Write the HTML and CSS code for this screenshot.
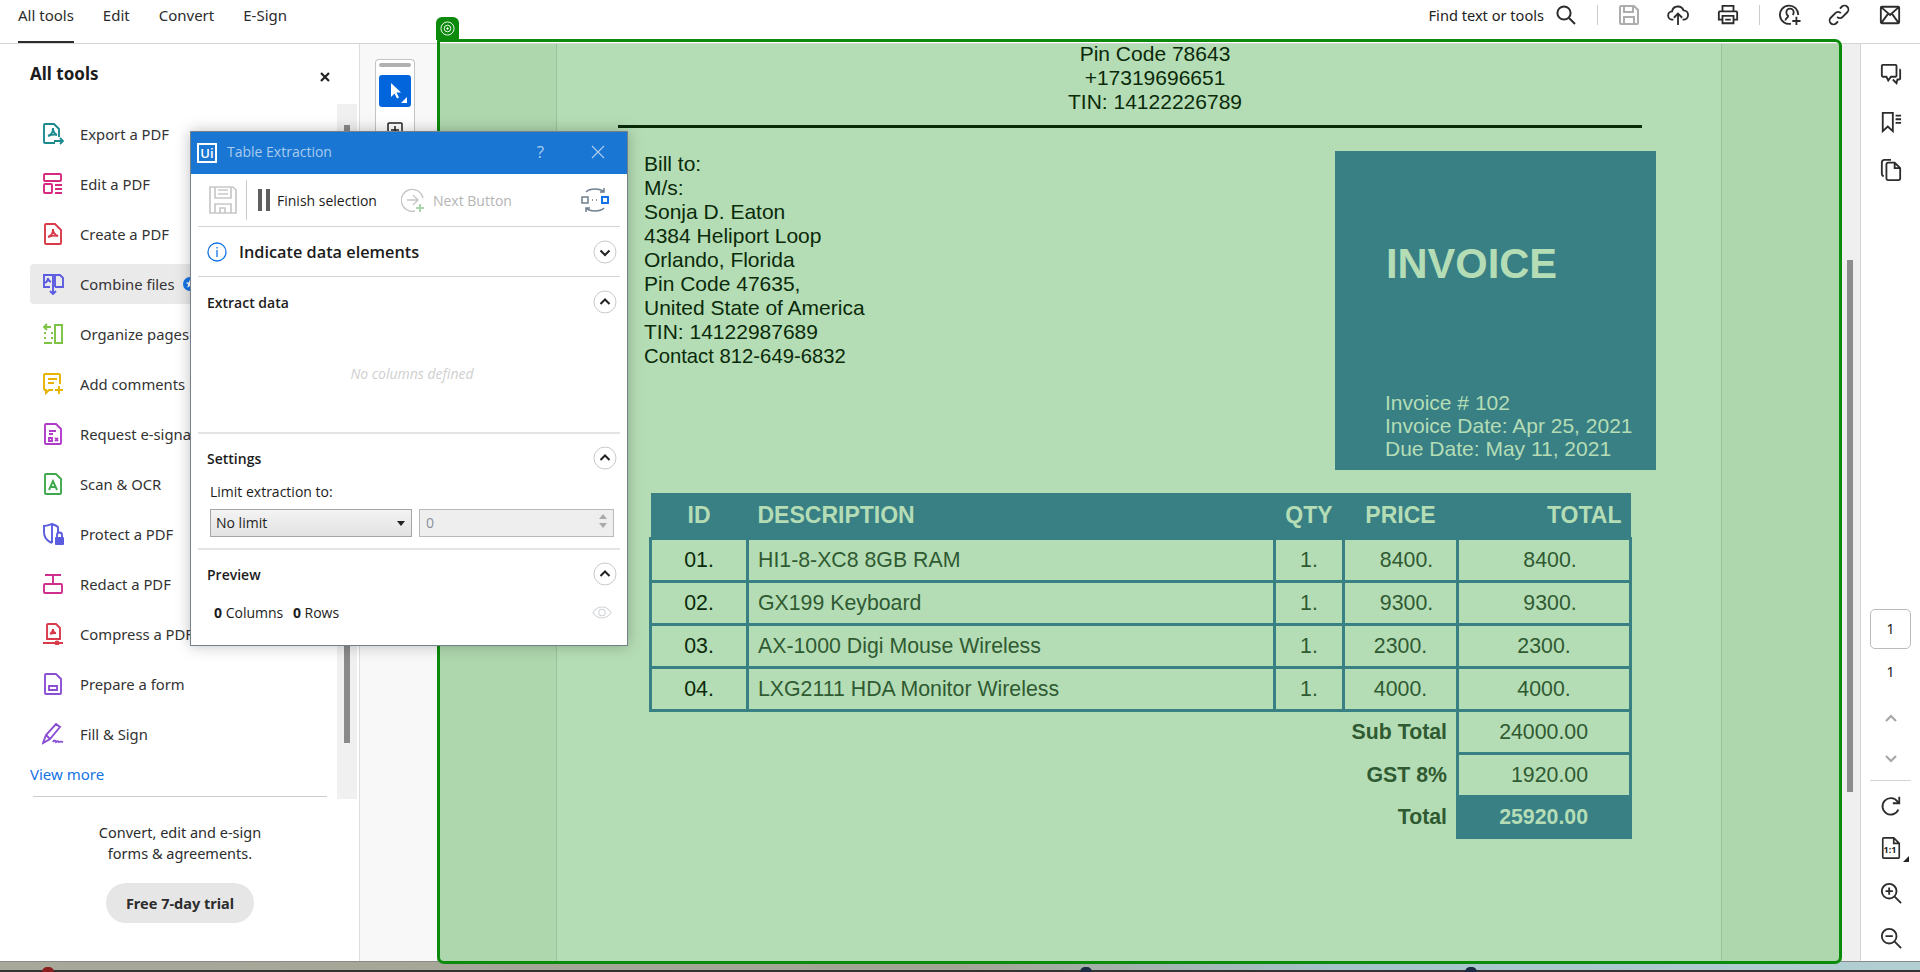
FILE: index.html
```html
<!DOCTYPE html>
<html lang="en">
  <head>
    <meta charset="UTF-8" />
    <title>Invoice - Table Extraction</title>
    <link rel="stylesheet" href="styles.css">
  </head>
  <body>
    <!-- Top bar -->
    <header class="topbar">
      <nav class="tabs">
        <a class="tab tab-active">All tools</a>
        <a class="tab">Edit</a>
        <a class="tab">Convert</a>
        <a class="tab">E-Sign</a>
      </nav>
      <div class="top-actions">
        <span class="find-label">Find text or tools</span>
        <svg class="ico search-ico" viewBox="0 0 22 22"><circle cx="9" cy="9" r="6.6"/><path d="M14 14l6 6"/></svg>
        <span class="top-sep sep-a"></span>
        <svg class="ico ico-off save-ico" viewBox="0 0 22 22"><path d="M3 2h13l4 4v13a1 1 0 0 1-1 1H3a1 1 0 0 1-1-1V3a1 1 0 0 1 1-1zM6 2v6h9V2M6 20v-7h10v7"/></svg>
        <svg class="ico upload-ico" viewBox="0 0 24 24"><path d="M7 17H6a4.500 4.500 0 0 1-.5-9A6.500 6.500 0 0 1 18 7a5 5 0 0 1 0 10h-1M12 23V11M7.500 15l4.500-4.500 4.500 4.500"/></svg>
        <svg class="ico print-ico" viewBox="0 0 24 24"><path d="M6 8V2h12v6M6 17H2V9a1 1 0 0 1 1-1h18a1 1 0 0 1 1 1v8h-4M6 13h12v8H6zM9 17h6"/></svg>
        <span class="top-sep sep-b"></span>
        <svg class="ico share-ico" viewBox="0 0 24 24"><path d="M21 12A10 10 0 1 0 13 21.500M7 18c0-3 3-3 3-5-1.500-1-2-2-2-4a4 4 0 0 1 8 0c0 1-.3 2-1 3M19 14v9M14.500 18.500h9"/></svg>
        <svg class="ico link-ico" viewBox="0 0 24 24"><path d="M10 14a4 4 0 0 0 6 0l5-5a4 4 0 0 0-6-6l-2 2M14 10a4 4 0 0 0-6 0l-5 5a4 4 0 0 0 6 6l2-2"/></svg>
        <svg class="ico mail-ico" viewBox="0 0 24 24"><path d="M3 3h18a1 1 0 0 1 1 1v16a1 1 0 0 1-1 1H3a1 1 0 0 1-1-1V4a1 1 0 0 1 1-1zM3 4l9 8 9-8M3 20l7-9.500M21 20l-7-9.500"/></svg>
      </div>
    </header>

    <main class="workspace">
      <!-- All tools panel -->
      <aside class="tools-panel">
        <div class="panel-head">
          <h2>All tools</h2>
          <svg class="panel-close" viewBox="0 0 10 10"><path d="M1 1l8 8M9 1l-8 8"/></svg>
        </div>
        <div class="panel-scroll"><span class="panel-thumb"></span></div>
        <ul class="tool-list">
          <li class="tool-row">
            <svg class="tool-ico" style="color:#1b8a8f" viewBox="0 0 22 22"><path d="M13 20H3a1 1 0 0 1-1-1V2a1 1 0 0 1 1-1h9l5 5v8M6 13c3-1 5-4 5-8 0 4 2 6 4 7-3-1-6 0-9 1zM12 18h9M18 15l3 3-3 3"/></svg>
            <span>Export a PDF</span>
          </li>
          <li class="tool-row">
            <svg class="tool-ico" style="color:#d6287e" viewBox="0 0 22 22"><path d="M3 1h15a1 1 0 0 1 1 1v5a1 1 0 0 1-1 1H3a1 1 0 0 1-1-1V2a1 1 0 0 1 1-1zM3 11h6a1 1 0 0 1 1 1v7a1 1 0 0 1-1 1H3a1 1 0 0 1-1-1v-7a1 1 0 0 1 1-1zM13 12h7M13 16h7M13 20h7"/></svg>
            <span>Edit a PDF</span>
          </li>
          <li class="tool-row">
            <svg class="tool-ico" style="color:#d93a4a" viewBox="0 0 22 22"><path d="M4 1h9l6 6v13a1 1 0 0 1-1 1H4a1 1 0 0 1-1-1V2a1 1 0 0 1 1-1zM6 14c3-1 5-4 5-8 0 4 2 6 5 7-4-1-7 0-10 1z"/></svg>
            <span>Create a PDF</span>
          </li>
          <li class="tool-row tool-row-active">
            <svg class="tool-ico" style="color:#5c5ce0" viewBox="0 0 22 22"><path d="M8 14H2V2h9v12M13 14h8V5l-3-3h-5v12M3 10c2-1 3-3 3-5 0 2 1 3 3 4M11 14v7M8 18l3 3 3-3"/></svg>
            <span>Combine files</span>
            <svg class="tool-badge" viewBox="0 0 14 14"><circle cx="7" cy="7" r="7"/><path d="M7 2.500l1.300 3h3l-2.400 2 .9 3.200L7 9l-2.800 1.700.9-3.200-2.400-2h3z"/></svg>
          </li>
          <li class="tool-row">
            <svg class="tool-ico" style="color:#7cc243" viewBox="0 0 22 22"><path d="M13 2h7v18h-7zM9 4H3M5 1L2 4l3 3M3 9v2M3 14v2M2 20h8M10 9v2M10 14v2"/></svg>
            <span>Organize pages</span>
          </li>
          <li class="tool-row">
            <svg class="tool-ico" style="color:#e6b400" viewBox="0 0 22 22"><path d="M11 17H7l-3 3v-3H3a1 1 0 0 1-1-1V2a1 1 0 0 1 1-1h14a1 1 0 0 1 1 1v9M6 6h9M6 10h6M17 13v8M13 17h8"/></svg>
            <span>Add comments</span>
          </li>
          <li class="tool-row">
            <svg class="tool-ico" style="color:#b13bc9" viewBox="0 0 22 22"><path d="M4 1h10l5 5v14a1 1 0 0 1-1 1H4a1 1 0 0 1-1-1V2a1 1 0 0 1 1-1zM7 8h7M7 11h4M7 15h3v3H7zM13 15l3 3M16 15l-3 3"/></svg>
            <span>Request e-signatures</span>
          </li>
          <li class="tool-row">
            <svg class="tool-ico" style="color:#3fa84c" viewBox="0 0 22 22"><path d="M4 1h10l5 5v14a1 1 0 0 1-1 1H4a1 1 0 0 1-1-1V2a1 1 0 0 1 1-1zM7 17l4-9 4 9M8.500 14h5"/></svg>
            <span>Scan &amp; OCR</span>
          </li>
          <li class="tool-row">
            <svg class="tool-ico" style="color:#5c5ce0" viewBox="0 0 22 22"><path d="M10 20C5 18 2 15 2 9V3c3 0 5-1 8-2 3 1 5 2 6 3v6M10 1v19"/><rect class="ico-solid" x="13" y="14" width="9" height="8" rx="1"/><path d="M15 14v-2a2.500 2.500 0 0 1 5 0v2"/></svg>
            <span>Protect a PDF</span>
          </li>
          <li class="tool-row">
            <svg class="tool-ico" style="color:#cf2f8c" viewBox="0 0 22 22"><path d="M3 2h16M11 2v9M3 11h16a1 1 0 0 1 1 1v7a1 1 0 0 1-1 1H3a1 1 0 0 1-1-1v-7a1 1 0 0 1 1-1z"/></svg>
            <span>Redact a PDF</span>
          </li>
          <li class="tool-row">
            <svg class="tool-ico" style="color:#d93a4a" viewBox="0 0 22 22"><path d="M5 16V2a1 1 0 0 1 1-1h8l4 4v11zM8 11c2-1 3-2 3-5 0 3 1 4 3 4-2 0-4 0-6 1zM1 20h20"/><circle cx="15" cy="20" r="1.500"/></svg>
            <span>Compress a PDF</span>
          </li>
          <li class="tool-row">
            <svg class="tool-ico" style="color:#8b4fd6" viewBox="0 0 22 22"><path d="M4 1h10l5 5v14a1 1 0 0 1-1 1H4a1 1 0 0 1-1-1V2a1 1 0 0 1 1-1zM7 13h8v4H7z"/></svg>
            <span>Prepare a form</span>
          </li>
          <li class="tool-row">
            <svg class="tool-ico" style="color:#8b4fd6" viewBox="0 0 22 22"><path d="M1 20L4 12 14 1l4 3L8 16l-7 4zM4 12l4 4M11 19c1-2 2-2 3 0 1-1 2-1 3 0 1-.5 2-.5 4 0"/></svg>
            <span>Fill &amp; Sign</span>
          </li>
        </ul>
        <a class="view-more">View more</a>
        <div class="promo">
          <p>Convert, edit and e-sign<br />forms &amp; agreements.</p>
          <button class="trial-btn">Free 7-day trial</button>
        </div>
      </aside>

      <!-- Document area -->
      <section class="canvas">
        <div class="tool-gutter">
          <div class="tool-strip">
            <span class="strip-grip"></span>
            <span class="strip-select">
              <svg viewBox="0 0 32 32"><path d="M12 8v14l3.500-3.500 2.500 5 2-1-2.500-5H22z"/><path d="M28 22v6h-6z"/></svg>
            </span>
            <svg class="strip-add" viewBox="0 0 16 16"><path d="M2 1h12a1 1 0 0 1 1 1v12a1 1 0 0 1-1 1H2a1 1 0 0 1-1-1V2a1 1 0 0 1 1-1zM8 4v8M4 8h8"/></svg>
          </div>
        </div>

        <div class="sheet">
          <div class="sheet-band band-left"></div>
          <div class="sheet-body">
            <div class="seller">
              <div>Pin Code 78643</div>
              <div>+17319696651</div>
              <div>TIN: 14122226789</div>
            </div>
            <div class="sheet-rule"></div>

            <div class="bill-row">
              <div class="bill-to">
                <div>Bill to:</div>
                <div>M/s:</div>
                <div>Sonja D. Eaton</div>
                <div>4384 Heliport Loop</div>
                <div>Orlando, Florida</div>
                <div>Pin Code 47635,</div>
                <div>United State of America</div>
                <div>TIN: 14122987689</div>
                <div class="bill-contact">Contact 812-649-6832</div>
              </div>
              <div class="invoice-box">
                <div class="invoice-title">INVOICE</div>
                <div>Invoice # 102</div>
                <div>Invoice Date: Apr 25, 2021</div>
                <div>Due Date: May 11, 2021</div>
              </div>
            </div>

            <table class="items">
              <colgroup>
                <col class="col-id" /><col class="col-desc" /><col class="col-qty" /><col class="col-price" /><col class="col-total" />
              </colgroup>
              <thead>
                <tr>
                  <th>ID</th>
                  <th class="th-desc">DESCRIPTION</th>
                  <th>QTY</th>
                  <th>PRICE</th>
                  <th class="th-total">TOTAL</th>
                </tr>
              </thead>
              <tbody>
                <tr>
                  <td class="cell-id">01.</td><td class="cell-desc">HI1-8-XC8 8GB RAM</td><td>1.</td><td class="nudge">8400.</td><td class="nudge">8400.</td>
                </tr>
                <tr>
                  <td class="cell-id">02.</td><td class="cell-desc">GX199 Keyboard</td><td>1.</td><td class="nudge">9300.</td><td class="nudge">9300.</td>
                </tr>
                <tr>
                  <td class="cell-id">03.</td><td class="cell-desc">AX-1000 Digi Mouse Wireless</td><td>1.</td><td>2300.</td><td>2300.</td>
                </tr>
                <tr>
                  <td class="cell-id">04.</td><td class="cell-desc">LXG2111 HDA Monitor Wireless</td><td>1.</td><td>4000.</td><td>4000.</td>
                </tr>
              </tbody>
              <tfoot>
                <tr>
                  <td class="sum-label" colspan="4">Sub Total</td><td class="sum-value">24000.00</td>
                </tr>
                <tr>
                  <td class="sum-label" colspan="4">GST 8%</td><td class="sum-value">1920.00</td>
                </tr>
                <tr class="sum-last">
                  <td class="sum-label" colspan="4">Total</td><td class="sum-value sum-grand">25920.00</td>
                </tr>
              </tfoot>
            </table>
          </div>
          <div class="sheet-band"></div>
        </div>

        <div class="canvas-scroll"><span class="canvas-thumb"></span></div>
      </section>

      <!-- Right rail -->
      <aside class="rail">
        <div class="rail-group">
          <svg class="ico" viewBox="0 0 24 24"><path d="M3 2h14a1 1 0 0 1 1 1v11a1 1 0 0 1-1 1h-5l-3 4-2-4H3a1 1 0 0 1-1-1V3a1 1 0 0 1 1-1zM21 7a1 1 0 0 1 1 1v9a1 1 0 0 1-1 1h-2l-1 4-4-4"/></svg>
          <svg class="ico" viewBox="0 0 24 24"><path d="M3 2h11v20l-5.500-5L3 22zM17 5h6M17 9h6M17 13h6"/></svg>
          <svg class="ico" viewBox="0 0 24 24"><path d="M4 19c-1-.5-2-1-2-3V4c0-2 1-3 3-3h7M9 4h7l6 6v11a2 2 0 0 1-2 2H9a2 2 0 0 1-2-2V6a2 2 0 0 1 2-2zM16 4v6h6"/></svg>
        </div>
        <div class="rail-pager">
          <div class="page-box">1</div>
          <div class="page-count">1</div>
          <svg class="pager-arrow" viewBox="0 0 14 10"><path d="M2 8l5-5 5 5"/></svg>
          <svg class="pager-arrow" viewBox="0 0 14 10"><path d="M2 2l5 5 5-5"/></svg>
          <div class="rail-sep"></div>
          <svg class="ico rotate-ico" viewBox="0 0 24 24"><path d="M20 16a9 9 0 1 1-1-9l2 2M21 2v7h-7"/></svg>
          <div class="fit-ico">
            <svg class="ico" viewBox="0 0 24 24"><path d="M4 1h11l6 6v15a1 1 0 0 1-1 1H4a1 1 0 0 1-1-1V2a1 1 0 0 1 1-1zM15 1v6h6"/></svg>
            <span class="fit-text">1:1</span>
            <span class="fit-corner"></span>
          </div>
          <svg class="ico" viewBox="0 0 24 24"><circle cx="10" cy="10" r="8"/><path d="M16 16l7 7M6 10h8M10 6v8"/></svg>
          <svg class="ico" viewBox="0 0 24 24"><circle cx="10" cy="10" r="8"/><path d="M16 16l7 7M6 10h8"/></svg>
        </div>
      </aside>
    </main>

    <footer class="taskbar">
      <span class="tray-tip tip-red"></span>
      <span class="tray-tip tip-a"></span>
      <span class="tray-tip tip-b"></span>
    </footer>

    <!-- Selection frame over the document -->
    <div class="frame"></div>
    <div class="frame-tab">
      <svg viewBox="0 0 16 16"><circle cx="8" cy="8" r="7"/><circle cx="8" cy="8" r="3.500"/><circle class="dot" cx="8" cy="8" r=".8"/></svg>
    </div>

    <!-- Table Extraction dialog -->
    <div class="dialog">
      <div class="dlg-title">
        <span class="ui-logo">Ui</span>
        <span class="dlg-name">Table Extraction</span>
        <span class="dlg-help">?</span>
        <svg class="dlg-close" viewBox="0 0 14 14"><path d="M1 1l12 12M13 1L1 13"/></svg>
      </div>
      <div class="dlg-toolbar">
        <svg class="dlg-save" viewBox="0 0 28 28"><path d="M1 1h23l3 3v23H1zM6 1v11h16V1M9 4h10M9 8h10M6 27v-9h16v9M11 27v-5h5v5"/></svg>
        <span class="dlg-vsep"></span>
        <span class="pause-bars"><i></i><i></i></span>
        <span class="btn-label">Finish selection</span>
        <svg class="next-ico" viewBox="0 0 24 24"><path d="M22 10a11 11 0 1 0-8 13M6 12h11M12 7l5 5-5 5"/><path class="next-plus" d="M19 16v8M15 20h8"/></svg>
        <span class="btn-label btn-off">Next Button</span>
        <svg class="refresh-ico" viewBox="0 0 30 28"><path d="M6 6c4-4 14-4 18 0M24 2v4h-4M24 22c-4 4-14 4-18 0M6 26v-4h4"/><rect x="2" y="11" width="6" height="6"/><rect class="blue" x="22" y="11" width="6" height="6"/><path d="M12 14h1M16 14h1"/></svg>
      </div>
      <div class="dlg-section dlg-indicate">
        <svg class="info-ico" viewBox="0 0 20 20"><circle cx="10" cy="10" r="9"/><path d="M10 8v7M10 5v1.500"/></svg>
        <span class="indicate-text">Indicate data elements</span>
        <svg class="chev" viewBox="0 0 24 24"><circle cx="12" cy="12" r="11"/><path class="chev-mark" d="M7.500 10.500L12 15l4.500-4.500"/></svg>
      </div>
      <div class="dlg-section dlg-extract">
        <div class="sec-head">
          <span>Extract data</span>
          <svg class="chev" viewBox="0 0 24 24"><circle cx="12" cy="12" r="11"/><path class="chev-mark" d="M7.500 14L12 9.500l4.500 4.500"/></svg>
        </div>
        <div class="no-columns">No columns defined</div>
      </div>
      <div class="dlg-section dlg-settings">
        <div class="sec-head">
          <span>Settings</span>
          <svg class="chev" viewBox="0 0 24 24"><circle cx="12" cy="12" r="11"/><path class="chev-mark" d="M7.500 14L12 9.500l4.500 4.500"/></svg>
        </div>
        <div class="limit-label">Limit extraction to:</div>
        <div class="limit-row">
          <div class="limit-select">No limit<span class="caret"></span></div>
          <div class="limit-input">0<span class="spin"><i class="spin-up"></i><i class="spin-down"></i></span></div>
        </div>
      </div>
      <div class="dlg-section dlg-preview">
        <div class="sec-head">
          <span>Preview</span>
          <svg class="chev" viewBox="0 0 24 24"><circle cx="12" cy="12" r="11"/><path class="chev-mark" d="M7.500 14L12 9.500l4.500 4.500"/></svg>
        </div>
        <div class="preview-row">
          <span><b>0</b> Columns <b class="rows-count">0</b> Rows</span>
          <svg class="eye-ico" viewBox="0 0 22 14"><path d="M1 7c5-8 15-8 20 0-5 8-15 8-20 0z"/><circle cx="11" cy="7" r="3.500"/></svg>
        </div>
      </div>
    </div>
  </body>
</html>
```

FILE: styles.css
```css
* {
  box-sizing: border-box;
}
body {
  margin: 0;
  height: 972px;
  overflow: hidden;
  display: flex;
  flex-direction: column;
  background: #fff;
  color: #222;
  font-family: "Noto Sans", sans-serif;
  font-size: 14px;
}

/* Generic line icons */
.ico {
  width: 22px;
  height: 22px;
  fill: none;
  stroke: #2c2c2c;
  stroke-width: 2;
  flex: none;
}
.ico-off {
  stroke: #adadad;
}

/* Top bar */
.topbar {
  height: 44px;
  flex: none;
  display: flex;
  justify-content: space-between;
  border-bottom: 1px solid #d5d5d5;
  padding-left: 18px;
}
.tabs {
  display: flex;
  gap: 29px;
}
.tab {
  height: 43px;
  padding-top: 5px;
  line-height: 20px;
  font-size: 15px;
  color: #2c2c2c;
}
.tab-active {
  border-bottom: 2px solid #2c2c2c;
}
.top-actions {
  display: flex;
  align-items: center;
  height: 30px;
  padding-right: 19px;
}
.find-label {
  margin-right: 11px;
  font-size: 14.600px;
}
.search-ico {
  margin-right: 20px;
}
.top-sep {
  width: 1px;
  height: 20px;
  background: #ccc;
}
.save-ico {
  margin-left: 20px;
}
.upload-ico {
  margin-left: 27px;
}
.print-ico {
  margin-left: 28px;
}
.sep-b {
  margin-left: 20px;
}
.share-ico {
  margin-left: 19px;
}
.link-ico {
  margin-left: 27px;
}
.mail-ico {
  margin-left: 29px;
}

/* Left panel */
.workspace {
  flex: 1;
  display: flex;
  min-height: 0;
}
.tools-panel {
  position: relative;
  width: 360px;
  flex: none;
  border-right: 1px solid #ddd;
  padding-left: 30px;
}
.panel-head {
  height: 58px;
  margin-bottom: 2px;
  display: flex;
  align-items: center;
  width: 300px;
  justify-content: space-between;
}
.panel-head h2 {
  margin: 0;
  font-size: 17px;
  font-weight: 700;
  color: #1c1c1c;
}
.panel-close {
  width: 10px;
  height: 10px;
  margin: 8px 0 0;
  fill: none;
  stroke: #222;
  stroke-width: 2.200;
}
.panel-scroll {
  position: absolute;
  left: 337px;
  top: 60px;
  width: 20px;
  height: 695px;
  background: #f0f0f0;
  display: flex;
  justify-content: center;
}
.panel-thumb {
  width: 6px;
  margin-top: 21px;
  height: 618px;
  background: #8a8a8a;
}
.tool-list {
  list-style: none;
  margin: 0;
  padding: 0;
  width: 290px;
  padding-top: 10px;
}
.tool-row {
  height: 40px;
  margin-bottom: 10px;
  display: flex;
  align-items: center;
  padding-left: 13px;
  font-size: 14.800px;
  color: #333;
  border-radius: 4px;
  white-space: nowrap;
}
.tool-row-active {
  background: #eaeaea;
}
.tool-ico {
  width: 22px;
  height: 22px;
  margin-right: 16px;
  margin-left: -1px;
  flex: none;
  fill: none;
  stroke: currentColor;
  stroke-width: 1.900;
}
.ico-solid {
  fill: currentColor;
  stroke: none;
}
.tool-badge {
  width: 14px;
  height: 14px;
  margin-left: 8px;
  fill: #1473e6;
}
.tool-badge path {
  fill: #fff;
}
.view-more {
  display: block;
  margin-top: 1px;
  line-height: 20px;
  color: #1473e6;
  font-size: 15px;
}
.promo {
  margin-top: 12px;
  margin-left: 3px;
  width: 294px;
  border-top: 1px solid #ccc;
  text-align: center;
}
.promo p {
  margin: 25px 0 0;
  line-height: 21px;
  font-size: 14.500px;
  color: #2c2c2c;
}
.trial-btn {
  width: 148px;
  height: 40px;
  margin-top: 19px;
  border: none;
  border-radius: 20px;
  background: #e6e6e6;
  color: #2c2c2c;
  font-family: "Noto Sans", sans-serif;
  font-size: 14.500px;
  font-weight: 700;
}

/* Canvas and tool strip */
.canvas {
  flex: 1;
  display: flex;
  min-width: 0;
  background: #f8f8f8;
}
.tool-gutter {
  width: 77px;
  flex: none;
  padding: 15px 0 0 15px;
}
.tool-strip {
  width: 40px;
  height: 120px;
  border: 1px solid #c4c4c4;
  border-bottom: none;
  border-radius: 4px 4px 0 0;
  background: #fff;
  padding: 3px;
  display: flex;
  flex-direction: column;
  align-items: center;
}
.strip-grip {
  width: 32px;
  height: 4px;
  border-radius: 2px;
  background: #b1b1b1;
}
.strip-select {
  width: 32px;
  height: 32px;
  margin-top: 8px;
  border-radius: 3px;
  background: #0265dc;
}
.strip-select svg {
  display: block;
  fill: #fff;
}
.strip-add {
  width: 16px;
  height: 16px;
  margin-top: 15px;
  fill: none;
  stroke: #222;
  stroke-width: 1.500;
}

/* Document page */
.sheet {
  width: 1405px;
  flex: none;
  display: flex;
  background: #b5ddb5;
  color: #0a2a0a;
  font-family: "Liberation Sans", Arial, sans-serif;
  font-size: 21px;
  line-height: 24px;
}
.sheet-band {
  flex: 1;
  background: #aed7ae;
}
.band-left {
  flex: none;
  width: 119px;
}
.sheet-body {
  width: 1166px;
  flex: none;
  border-left: 1px solid #9cc09c;
  border-right: 1px solid #9cc09c;
}
.seller {
  display: flex;
  flex-direction: column;
  gap: 4px;
  padding-left: 32px;
  text-align: center;
  line-height: 20px;
}
.sheet-rule {
  width: 1024px;
  height: 3px;
  margin: 13px 0 0 61px;
  background: #082b08;
}
.bill-row {
  display: flex;
  justify-content: space-between;
  margin-top: 23px;
  padding: 0 65px 0 87px;
}
.bill-to {
  padding-top: 1px;
}
.bill-contact {
  font-size: 20.300px;
}
.invoice-box {
  width: 321px;
  height: 319px;
  padding: 90px 0 0 50px;
  background: #398085;
  color: #b5ddb5;
  line-height: 23px;
}
.invoice-title {
  height: 46px;
  margin: 0 0 104px 1px;
  font-size: 41.600px;
  line-height: 46px;
  font-weight: 700;
}

/* Items table */
.items {
  width: 980px;
  margin: 23px 0 0 92px;
  table-layout: fixed;
  border-collapse: collapse;
  color: #2f5a32;
  font-size: 21.300px;
}
.col-id {
  width: 97px;
}
.col-desc {
  width: 527px;
}
.col-qty {
  width: 69px;
}
.col-price {
  width: 114px;
}
.col-total {
  width: 173px;
}
.items th {
  height: 45px;
  padding: 1px 0 0;
  background: #398085;
  color: #b5ddb5;
  font-size: 23px;
  font-weight: 700;
}
.items .th-desc {
  text-align: left;
  padding-left: 10px;
}
.items .th-total {
  text-align: right;
  padding-right: 9px;
}
.items td {
  height: 43px;
  padding: 0;
  border: 3px solid #398085;
  text-align: center;
}
.items .cell-id {
  color: #0a2a0a;
}
.items .cell-desc {
  text-align: left;
  padding-left: 9px;
}
.items .nudge {
  padding-left: 12px;
}
.items .sum-label {
  border: none;
  border-right: 3px solid #398085;
  padding-right: 9px;
  text-align: right;
  font-weight: 700;
}
.items .sum-value {
  text-align: right;
  padding-right: 41px;
}
.items .sum-last td {
  height: 41px;
}
.items .sum-grand {
  background: #398085;
  border-color: #398085;
  color: #b5ddb5;
  font-weight: 700;
}

.canvas-scroll {
  flex: 1;
  background: #efefef;
  padding-left: 5px;
}
.canvas-thumb {
  display: block;
  width: 6px;
  height: 532px;
  margin-top: 216px;
  background: #8c8c8c;
}

/* Right rail */
.rail {
  width: 60px;
  flex: none;
  border-left: 1px solid #d5d5d5;
  display: flex;
  flex-direction: column;
  align-items: center;
  justify-content: space-between;
  padding: 19px 0 12px;
}
.rail-group {
  display: flex;
  flex-direction: column;
  align-items: center;
  gap: 26px;
}
.rail-pager {
  display: flex;
  flex-direction: column;
  align-items: center;
}
.page-box {
  width: 41px;
  height: 40px;
  border: 1px solid #bbb;
  border-radius: 5px;
  text-align: center;
  line-height: 38px;
  font-size: 14px;
}
.page-count {
  margin-top: 13px;
  line-height: 20px;
  font-size: 14px;
}
.pager-arrow {
  width: 14px;
  height: 10px;
  margin-top: 31px;
  fill: none;
  stroke: #a8a8a8;
  stroke-width: 2.200;
}
.pager-arrow + .pager-arrow {
  margin-top: 31px;
}
.rail-sep {
  width: 41px;
  height: 1px;
  margin: 16px 0 14px;
  background: #d5d5d5;
}
.rail-pager .ico {
  margin-bottom: 23px;
}
.rail-pager .rotate-ico {
  margin-bottom: 20px;
}
.rail-pager .ico:last-child {
  margin-bottom: 0;
}
.fit-ico {
  position: relative;
  height: 22px;
  margin-bottom: 23px;
}
.fit-ico .ico {
  margin: 0;
  stroke-width: 1.800;
}
.fit-text {
  position: absolute;
  left: 4px;
  top: 7px;
  font-size: 9px;
  line-height: 12px;
  font-weight: 700;
}
.fit-corner {
  position: absolute;
  right: -7px;
  bottom: -3px;
  border-style: solid;
  border-width: 0 0 6px 6px;
  border-color: transparent transparent #222 transparent;
}

/* Bottom strip of the desktop behind the window */
.taskbar {
  position: relative;
  height: 11px;
  flex: none;
  border-top: 1px solid #8a8a8a;
  background: linear-gradient(to bottom, transparent 8px, #333 8px),
    linear-gradient(to right, #a8a89a 0%, #a4a595 50%, #a3c3cb 70%, #b2cfd3 100%);
}
.tray-tip {
  position: absolute;
  bottom: 0;
  width: 12px;
  height: 5px;
  border-radius: 6px 6px 0 0;
  background: #1d2a44;
}
.tip-red {
  left: 42px;
  background: #8c1f1f;
}
.tip-a {
  left: 1080px;
}
.tip-b {
  left: 1465px;
}

/* Selection frame */
.frame {
  position: absolute;
  left: 437px;
  top: 39px;
  width: 1405px;
  height: 925px;
  border: 3px solid #0c8a0c;
  border-radius: 2px 7px 7px 7px;
  pointer-events: none;
}
.frame-tab {
  position: absolute;
  left: 436px;
  top: 17px;
  width: 23px;
  height: 23px;
  border-radius: 6px 6px 0 0;
  background: #0c8a0c;
  padding: 4px;
}
.frame-tab svg {
  display: block;
  width: 15px;
  height: 15px;
  fill: none;
  stroke: #fff;
}
.frame-tab .dot {
  fill: #fff;
}

/* Table Extraction dialog */
.dialog {
  position: absolute;
  left: 190px;
  top: 131px;
  width: 438px;
  height: 515px;
  border: 1px solid #76808a;
  background: #fff;
  box-shadow: 0 0 14px rgba(0, 0, 0, 0.25);
  font-family: "Open Sans", sans-serif;
  font-size: 14px;
  color: #1c1c1c;
}
.dlg-title {
  height: 42px;
  display: flex;
  align-items: center;
  background: #1976d2;
  padding: 0 22px 0 6px;
  color: #a9cbee;
}
.ui-logo {
  width: 20px;
  height: 20px;
  border: 2px solid #fff;
  color: #fff;
  font-size: 13px;
  line-height: 16px;
  text-align: center;
  font-weight: 600;
}
.dlg-name {
  margin: -3px 0 0 10px;
  flex: 1;
}
.dlg-help {
  margin: -3px 47px 0 0;
  font-size: 17px;
}
.dlg-close {
  width: 14px;
  height: 14px;
  margin-top: -3px;
  fill: none;
  stroke: #a9cbee;
  stroke-width: 1.200;
}
.dlg-toolbar {
  height: 53px;
  margin: 0 7px;
  padding-left: 11px;
  border-bottom: 1px solid #d4d4d4;
  display: flex;
  align-items: center;
}
.dlg-save {
  width: 28px;
  height: 28px;
  fill: none;
  stroke: #c8c8c8;
  stroke-width: 1.700;
}
.dlg-vsep {
  width: 1px;
  height: 40px;
  margin: 0 11px 0 9px;
  background: #c8c8c8;
}
.pause-bars {
  display: flex;
  gap: 4px;
  margin-right: 7px;
}
.pause-bars i {
  display: block;
  width: 4px;
  height: 22px;
  background: #5f5f5f;
}
.btn-label {
  white-space: nowrap;
}
.btn-off {
  color: #b5b5b5;
}
.next-ico {
  width: 24px;
  height: 24px;
  margin: 0 8px 0 24px;
  fill: none;
  stroke: #c6c6c6;
  stroke-width: 1.300;
}
.next-plus {
  stroke: #a9d7a9;
  stroke-width: 2;
}
.refresh-ico {
  width: 30px;
  height: 28px;
  margin-left: auto;
  margin-right: 10px;
  fill: none;
  stroke: #6f7f8f;
  stroke-width: 1.500;
}
.refresh-ico .blue {
  stroke: #1473e6;
  stroke-width: 2;
}
.dlg-section {
  margin: 0 7px;
  padding: 0 3px 0 9px;
}
.dlg-indicate {
  height: 50px;
  display: flex;
  align-items: center;
  border-bottom: 1px solid #d4d4d4;
}
.info-ico {
  width: 20px;
  height: 20px;
  fill: none;
  stroke: #1473e6;
  stroke-width: 1.300;
}
.indicate-text {
  flex: 1;
  margin-left: 12px;
  font-size: 16.300px;
  font-weight: 600;
}
.chev {
  width: 24px;
  height: 24px;
  flex: none;
  fill: #fff;
  stroke: #c9c9c9;
}
.chev-mark {
  fill: none;
  stroke: #222;
  stroke-width: 2;
}
.sec-head {
  display: flex;
  justify-content: space-between;
  align-items: center;
  font-weight: 600;
}
.dlg-extract {
  height: 157px;
  border-bottom: 2px solid #e4e4e4;
  padding-top: 13px;
}
.no-columns {
  margin-top: 50px;
  text-align: center;
  font-style: italic;
  color: #cfcfcf;
}
.dlg-settings {
  height: 116px;
  border-bottom: 2px solid #e4e4e4;
  padding-top: 12px;
}
.limit-label {
  margin: 13px 0 0 3px;
  line-height: 18px;
}
.limit-row {
  display: flex;
  gap: 7px;
  margin: 8px 0 0 3px;
}
.limit-select {
  position: relative;
  width: 202px;
  height: 28px;
  padding-left: 5px;
  border: 1px solid #a5a5a5;
  background: linear-gradient(#f3f3f3, #e3e3e3);
  line-height: 26px;
}
.caret {
  position: absolute;
  right: 6px;
  top: 11px;
  border-style: solid;
  border-width: 5px 4px 0 4px;
  border-color: #222 transparent transparent transparent;
}
.limit-input {
  position: relative;
  width: 195px;
  height: 28px;
  padding-left: 6px;
  border: 1px solid #b9b9b9;
  background: #eee;
  color: #8a8f99;
  line-height: 26px;
}
.spin {
  position: absolute;
  right: 6px;
  top: 4px;
  display: flex;
  flex-direction: column;
  gap: 4px;
}
.spin i {
  display: block;
  border-style: solid;
  border-color: transparent;
}
.spin-up {
  border-width: 0 4px 5px 4px;
  border-bottom-color: #aaa !important;
}
.spin-down {
  border-width: 5px 4px 0 4px;
  border-top-color: #aaa !important;
}
.dlg-preview {
  padding-top: 12px;
}
.preview-row {
  display: flex;
  justify-content: space-between;
  align-items: center;
  margin: 17px 5px 0 7px;
}
.preview-row b {
  font-weight: 700;
}
.rows-count {
  margin-left: 6px;
}
.eye-ico {
  width: 20px;
  height: 13px;
  fill: none;
  stroke: #cfd3d8;
  stroke-width: 1.200;
}
```
